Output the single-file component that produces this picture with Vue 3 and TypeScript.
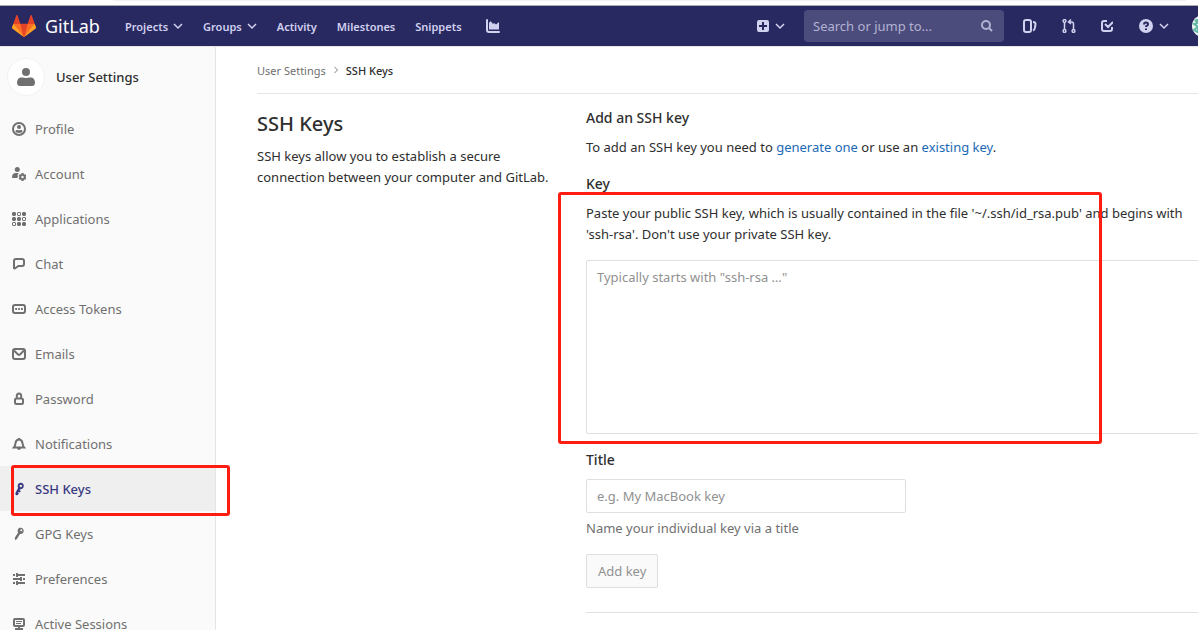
<script setup lang="ts">
interface Icon {
  fill?: string
  stroke?: string
}

interface NavItem {
  label: string
  icon: Icon
  active?: boolean
}

const items: NavItem[] = [
  {
    label: 'Profile',
    icon: {
      stroke: 'M7 1a6 6 0 1 0 0 12A6 6 0 1 0 7 1z',
      fill: 'M7 3a2 2 0 1 1 0 4a2 2 0 1 1 0-4zM3.500 9.300c0-1 1-1.700 2-1.300c1 .3 2 .3 3 0c1-.4 2 .3 2 1.300c0 1-1.500 1.700-3.500 1.700s-3.500-.7-3.500-1.700z',
    },
  },
  {
    label: 'Account',
    icon: {
      fill: 'M5.300 0a2.500 2.500 0 1 1 0 5a2.500 2.500 0 1 1 0-5zM0 10.300C0 7.500 1.500 6 4 6h2.700L5.500 8l.5 1.500l-.8 1.500H.8c-.5 0-.8-.2-.8-.7zM9.500 6h2l.4 1.500l1.500-.3l1 1.800l-1 1l1 1l-1 1.800l-1.500-.3l-.4 1.500h-2l-.4-1.500l-1.500.3l-1-1.800l1-1l-1-1l1-1.800l1.500.3zM10.500 8.800a1.200 1.200 0 1 0 0 2.400a1.200 1.200 0 1 0 0-2.400z',
    },
  },
  {
    label: 'Applications',
    icon: {
      fill: 'M1 0h2l1 1v2l-1 1H1L0 3V1zM6 0h2l1 1v2l-1 1H6L5 3V1zM6 1v2h2V1zM11 0h2l1 1v2l-1 1h-2l-1-1V1zM1 5h2l1 1v2l-1 1H1L0 8V6zM6 5h2l1 1v2l-1 1H6L5 8V6zM11 5h2l1 1v2l-1 1h-2l-1-1V6zM11 6v2h2V6zM1 10h2l1 1v2l-1 1H1l-1-1v-2zM1 11v2h2v-2zM6 10h2l1 1v2l-1 1H6l-1-1v-2zM11 10h2l1 1v2l-1 1h-2l-1-1v-2z',
    },
  },
  { label: 'Chat', icon: { stroke: 'M2 12V4q0-2 2-2h6q2 0 2 2v3q0 2-2 2H6.500L2 12' } },
  {
    label: 'Access Tokens',
    icon: {
      stroke: 'M3 3h8q2 0 2 2v4q0 2-2 2H3q-2 0-2-2V5q0-2 2-2z',
      fill: 'M3.200 6h1.800v2H3.200zM6.100 6h1.800v2H6.100zM9 6h1.800v2H9z',
    },
  },
  {
    label: 'Emails',
    icon: { stroke: 'M3 2h8q2 0 2 2v6q0 2-2 2H3q-2 0-2-2V4q0-2 2-2zM2 3.500l4 4q1 .8 2 0l4-4' },
  },
  {
    label: 'Password',
    icon: { stroke: 'M4.500 6.500h5q1.500 0 1.500 1.500v2.500q0 1.500-1.500 1.500h-5Q3 12 3 10.500V8q0-1.500 1.500-1.500zM4.800 6V4q0-2.500 2.200-2.500T9.200 4v2' },
  },
  {
    label: 'Notifications',
    icon: {
      stroke: 'M2 10.500c1-1 1.200-2 1.500-4.300C3.800 3.800 5 2.500 7 2.500s3.200 1.300 3.500 3.700c.3 2.300.5 3.300 1.500 4.300z',
      fill: 'M6 1h2v1.500H6zM5 11h4q-.4 2-2 2t-2-2z',
    },
  },
  {
    label: 'SSH Keys',
    active: true,
    icon: {
      fill: 'M7.500 1c2.500-.8 4.700 1 4.200 3.500C11.300 6.600 9.700 7.500 8.200 7.200L7.600 8.300l1.200.8l-.9 1.500l-1.500-.5l-.4.8l.9.6l-1 1.400l-2 .3L3.300 11.200l2.800-5.100C5.200 4 5.700 1.700 7.500 1zM8.700 2.800a1.200 1.200 0 1 0 .2 2.400a1.200 1.200 0 1 0-.2-2.400z',
    },
  },
  {
    label: 'GPG Keys',
    icon: {
      fill: 'M7.200 1c2.500-1 4.700.6 4.500 3c-.2 2.300-1.900 3.300-3.700 2.900l-3.100 5L3.200 13.200l-.4-2.400l3.200-5C5.200 3.700 5.700 1.700 7.200 1zM9.300 2.200a1 1 0 1 0 0 2a1 1 0 1 0 0-2z',
    },
  },
  {
    label: 'Preferences',
    icon: {
      fill: 'M1 2h2v2H1zM4 1h2v1h7v2H6v1H4zM1 6h7V5h2v4H8V8H1zM11 6h2v2h-2zM1 10h2v2H1zM4 9h2v1h7v2H6v1H4z',
    },
  },
  {
    label: 'Active Sessions',
    icon: {
      stroke: 'M3 2h8q1 0 1 1v5q0 1-1 1H3Q2 9 2 8V3q0-1 1-1z',
      fill: 'M4 4h6v1H4zM4 6h5v1H4zM6 9h2v2H6zM3 11h8v2H3z',
    },
  },
]

const links = ['Activity', 'Milestones', 'Snippets']
</script>

<template>
  <div class="page">
    <div class="strip"></div>
    <header class="topbar">
      <a class="brand" href="#">
        <svg width="24" height="22" viewBox="0 0 24 22" aria-hidden="true">
          <path fill="#e24329" d="M4.600 0 8 9h8L19.400 0 24 13 12 22 0 13z" />
          <path fill="#292961" d="M5.400 0h13.200L15.600 8.700H8.400z" />
          <path fill="#fc6d26" d="M1.500 8.700h6.900L12 22 0 13zM22.500 8.700h-6.900L12 22l12-9z" />
          <path fill="#fca326" d="M1.500 8.700 12 22 .4 13.600Q-.2 13 .1 12.300zM22.500 8.700 12 22l11.600-8.400q.6-.6.3-1.300z" />
          <path fill="#e24329" d="M4.600 0q.5-.4.8.3l3 8.400H1.500zM19.400 0q-.5-.4-.8.3l-3 8.400h6.900zM8.400 8.700h7.200L12 22z" />
        </svg>
        <span>GitLab</span>
      </a>
      <nav class="menu">
        <button type="button">Projects
          <svg class="caret" viewBox="0 0 10 10"><path d="M1 3l4 4 4-4" /></svg>
        </button>
        <button type="button">Groups
          <svg class="caret" viewBox="0 0 10 10"><path d="M1 3l4 4 4-4" /></svg>
        </button>
        <a v-for="link in links" :key="link" href="#">{{ link }}</a>
        <a class="chart" href="#" aria-label="Analytics">
          <svg width="14" height="14" viewBox="0 0 14 14">
            <path fill="currentColor" d="M0 1q0-1 1-1t1 1v10q0 1 1 1h10q1 0 1 1t-1 1H3q-3 0-3-3zM3 4l1-1.500h1L7 5l1-1 2 1.500L13 3v7.500H3z" />
          </svg>
        </a>
      </nav>
      <div class="tools">
        <button class="new" type="button" aria-label="New">
          <svg width="12" height="12" viewBox="0 0 12 12">
            <path fill="currentColor" fill-rule="evenodd" d="M2 0h8q2 0 2 2v8q0 2-2 2H2q-2 0-2-2V2q0-2 2-2zM5 2v3H2v2h3v3h2V7h3V5H7V2z" />
          </svg>
          <svg class="caret" viewBox="0 0 10 10"><path d="M1 3l4 4 4-4" /></svg>
        </button>
        <form class="search" @submit.prevent>
          <input type="text" placeholder="Search or jump to..." aria-label="Search or jump to" />
          <svg width="12" height="12" viewBox="0 0 12 12" aria-hidden="true">
            <circle cx="5" cy="5" r="4" /><path d="m8 8 3 3" />
          </svg>
        </form>
        <a class="issues" href="#" aria-label="Issues">
          <svg width="14" height="14" viewBox="0 0 14 14">
            <rect x="1" y="1" width="7" height="12" rx="2" />
            <path d="M10 3q2.500 0 2.500 2l-.5 3.500Q11.700 11 10 11.500" />
          </svg>
        </a>
        <a class="merges" href="#" aria-label="Merge requests">
          <svg class="thin" width="14" height="14" viewBox="0 0 14 14">
            <circle cx="2.500" cy="2" r="1.400" /><circle cx="2.500" cy="12" r="1.400" /><circle cx="11.500" cy="12" r="1.400" />
            <path d="M2.500 3.500v7M11.500 10.500V5q0-2-2-2H7M9 .5 6.500 3 9 5" />
          </svg>
        </a>
        <a class="todos" href="#" aria-label="To-do list">
          <svg width="12" height="12" viewBox="0 0 12 12">
            <path d="M6 1H3Q1 1 1 3v6q0 2 2 2h6q2 0 2-2V7M4 4l3 3 5-5" />
          </svg>
        </a>
        <button class="help" type="button" aria-label="Help">
          <svg width="14" height="14" viewBox="0 0 14 14">
            <circle cx="7" cy="7" r="7" fill="currentColor" stroke="none" />
            <path class="mark" d="M5 5.500q0-2 2-2t2 1.700Q9 6.300 7.800 6.800 7 7.100 7 8M7 9.500v1.500" />
          </svg>
          <svg class="caret" viewBox="0 0 10 10"><path d="M1 3l4 4 4-4" /></svg>
        </button>
        <a class="user" href="#" aria-label="Your profile">
          <svg width="22" height="22" viewBox="0 0 22 22">
            <circle cx="11" cy="11" r="11" fill="#e9f4f1" />
            <path d="m3 5 3 3-4 1 4 3-4 3 5 3M5 4v5M6 11v7" stroke="#62b8a5" fill="none" stroke-width="2" />
          </svg>
        </a>
      </div>
    </header>

    <div class="body">
      <aside class="sidebar">
        <a class="context" href="#">
          <span class="avatar">
            <svg width="18" height="18" viewBox="0 0 18 18">
              <circle cx="9" cy="4" r="4" /><path d="M0 14.500C0 11 2.500 9 5 9.500q4 .8 8 0c2.500-.5 5 1.500 5 5 0 2.500-1.200 3.500-3 3.500H3c-1.800 0-3-1-3-3.500z" />
            </svg>
          </span>
          <span>User Settings</span>
        </a>
        <ul>
          <li v-for="item in items" :key="item.label" :class="{ active: item.active }">
            <a href="#">
              <svg width="14" height="14" viewBox="0 0 14 14" aria-hidden="true">
                <path v-if="item.icon.stroke" class="line" :d="item.icon.stroke" />
                <path v-if="item.icon.fill" fill="currentColor" fill-rule="evenodd" :d="item.icon.fill" />
              </svg>
              <span>{{ item.label }}</span>
            </a>
            <div v-if="item.active" class="marker"></div>
          </li>
        </ul>
      </aside>

      <main>
        <nav class="crumbs" aria-label="Breadcrumb">
          <a href="#">User Settings</a>
          <svg width="8" height="8" viewBox="0 0 8 8"><path d="m2.500 1 3 3-3 3" /></svg>
          <a class="here" href="#">SSH Keys</a>
        </nav>
        <div class="columns">
          <section class="intro">
            <h1>SSH Keys</h1>
            <p>SSH keys allow you to establish a secure connection between your computer and GitLab.</p>
          </section>
          <section>
            <h2>Add an SSH key</h2>
            <p class="lead">To add an SSH key you need to <a href="#">generate one</a> or use an <a href="#">existing key</a>.</p>
            <form @submit.prevent>
              <label for="key">Key</label>
              <div class="key-field">
                <p>Paste your public SSH key, which is usually contained in the file '~/.ssh/id_rsa.pub' and begins with 'ssh-rsa'. Don't use your private SSH key.</p>
                <textarea id="key" placeholder="Typically starts with &quot;ssh-rsa …&quot;"></textarea>
                <div class="marker"></div>
              </div>
              <label for="title">Title</label>
              <input id="title" type="text" placeholder="e.g. My MacBook key" />
              <p class="hint">Name your individual key via a title</p>
              <button type="submit" disabled>Add key</button>
            </form>
            <hr />
          </section>
        </div>
      </main>
    </div>
  </div>
</template>

<style>
body {
  margin: 0;
}
</style>

<style scoped>
.page {
  display: flex;
  flex-direction: column;
  height: 100vh;
  overflow: hidden;
  background: #fff;
  color: #2e2e2e;
  font: 13px/21px "Noto Sans", "Open Sans", sans-serif;
}
* {
  box-sizing: border-box;
}
a {
  color: inherit;
  text-decoration: none;
}
button,
input,
textarea {
  font: inherit;
}
p,
h1,
h2,
ul {
  margin: 0;
  padding: 0;
}
svg {
  display: block;
  flex: none;
}
.strip {
  flex: none;
  height: 6px;
  border-bottom: 1px solid #adadad;
}
.strip::before {
  display: block;
  height: 1px;
  margin: 0 12px 0 113px;
  background: #f1f1f1;
  content: "";
}
.topbar {
  display: flex;
  flex: none;
  align-items: center;
  height: 41px;
  padding-left: 12px;
  background: #292961;
  border-bottom: 1px solid #e5e5e5;
  color: #d1d1f0;
}
.brand {
  display: flex;
  align-items: center;
  gap: 9px;
  width: 113px;
  color: #fff;
  font-size: 18px;
}
.topbar button {
  display: flex;
  align-items: center;
  padding: 0;
  border: 0;
  background: none;
  color: inherit;
}
.caret {
  width: 10px;
  height: 10px;
}
.caret path {
  fill: none;
  stroke: currentColor;
  stroke-width: 1.500;
}
.menu {
  display: flex;
  align-items: center;
  gap: 20px;
  font-size: 11px;
  font-weight: 600;
}
.menu button {
  gap: 5px;
}
.chart {
  margin-left: 4px;
}
.tools {
  display: flex;
  align-items: center;
  margin: 0 -16px 0 auto;
}
.new {
  gap: 6px;
}
.search {
  display: flex;
  align-items: center;
  width: 200px;
  height: 32px;
  margin: 0 19px;
  padding: 0 11px 0 9px;
  border-radius: 4px;
  background: #4c4c7c;
}
.search input {
  flex: 1;
  min-width: 0;
  padding: 0;
  border: 0;
  outline: 0;
  background: none;
  color: #d1d1f0;
}
.search input::placeholder {
  color: #b2b2d3;
}
.search svg,
.issues svg,
.merges svg,
.todos svg,
.help svg {
  fill: none;
  stroke: currentColor;
  stroke-width: 2;
}
.search svg {
  color: #b2b2d3;
}
.issues,
.merges {
  margin-right: 25px;
}
.todos {
  margin-right: 26px;
}
.tools .thin {
  stroke-width: 1.500;
}
.mark {
  stroke: #292961;
}
.help {
  gap: 6px;
}
.user {
  margin-left: 23px;
}
.body {
  display: flex;
  flex: 1;
  min-height: 0;
}
.sidebar {
  position: relative;
  z-index: 1;
  flex: none;
  width: 216px;
  border-right: 1px solid #e5e5e5;
  background: #fafafa;
  color: #707070;
  line-height: 22px;
}
.context {
  display: flex;
  align-items: center;
  gap: 11px;
  height: 59px;
  padding-left: 7px;
  color: #2e2e2e;
  font-weight: 500;
}
.avatar {
  display: grid;
  place-items: center;
  width: 38px;
  height: 38px;
  border: 1px solid #f2f2f2;
  border-radius: 50%;
  background: #fff;
}
.avatar svg {
  fill: #707070;
}
.sidebar ul {
  list-style: none;
}
.sidebar li {
  position: relative;
}
.sidebar li a {
  display: flex;
  align-items: center;
  gap: 9px;
  height: 45px;
  padding-left: 12px;
}
.line {
  fill: none;
  stroke: currentColor;
  stroke-width: 2;
}
.sidebar .active a {
  background: #efefef;
  color: #393982;
  font-weight: 500;
}
.marker {
  position: absolute;
  border: 3px solid #ff1d11;
  border-radius: 3px;
  pointer-events: none;
}
.active .marker {
  inset: -1px -15px -5px 11px;
}
main {
  flex: 1;
  min-width: 0;
  margin-right: -4px;
  padding-left: 41px;
}
.crumbs {
  display: flex;
  align-items: center;
  gap: 6px;
  height: 47px;
  border-bottom: 1px solid #e5e5e5;
  color: #707070;
  font-size: 11px;
}
.crumbs svg {
  fill: none;
  stroke: #808080;
}
.here {
  color: #2e2e2e;
  font-weight: 500;
}
.columns {
  display: grid;
  grid-template-columns: 313px 1fr;
  gap: 16px;
  padding-top: 14px;
}
h1 {
  margin-bottom: 6px;
  font-size: 20px;
  font-weight: 500;
  line-height: 32px;
}
h2,
label {
  display: block;
  margin-bottom: 8px;
  font-size: 14px;
  font-weight: 500;
  line-height: 20px;
}
.lead {
  margin: 9px 0 16px;
}
.lead a {
  color: #1b69b6;
}
.key-field {
  position: relative;
  margin: 9px 0 16px;
}
.key-field .marker {
  top: -11px;
  right: 100px;
  bottom: -10px;
  left: -28px;
}
textarea,
#title {
  display: block;
  padding: 6px 10px;
  border: 1px solid #dfdfdf;
  border-radius: 2px;
  background: #fff;
  color: #2e2e2e;
}
textarea {
  width: 100%;
  height: 174px;
  margin-top: 15px;
  resize: none;
}
#title {
  width: 320px;
  height: 34px;
  margin-top: 9px;
}
.hint {
  margin: 5px 0 15px;
  color: #707070;
}
textarea::placeholder,
#title::placeholder {
  color: #919191;
  opacity: 1;
}
form > button[type="submit"] {
  height: 34px;
  padding: 0 11px;
  border: 1px solid #dfdfdf;
  border-radius: 2px;
  background: #fafafa;
  color: #919191;
}
hr {
  margin: 24px 0 0;
  border: 0;
  border-top: 1px solid #dfdfdf;
}
</style>
